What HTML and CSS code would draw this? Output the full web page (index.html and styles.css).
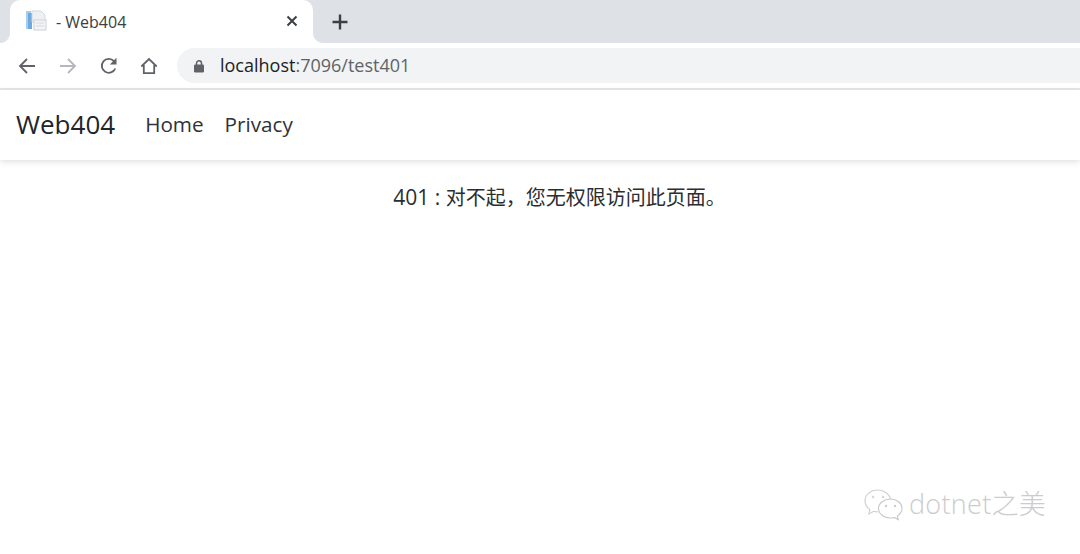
FILE: index.html
```html
<!DOCTYPE html>
<html lang="zh-CN">
<head>
<meta charset="utf-8">
<title>- Web404</title>
<link rel="stylesheet" href="styles.css">
</head>
<body>
<div class="tabstrip">
  <div class="tab">
    <svg class="favicon" width="22" height="22" viewBox="0 0 22 22">
      <rect x="1" y="1" width="5" height="18" fill="#a9cdee"/>
      <rect x="3" y="3" width="4" height="16" fill="#6fa9de"/>
      <path d="M7 1h9l4 4v7H7z" fill="#eef1f4" stroke="#d3d8de" stroke-width="1"/>
      <rect x="9" y="10" width="12" height="10" fill="#f3f4f6" stroke="#ccd2d8"/>
      <path d="M11 13h8M11 16h8" stroke="#d5d9de"/>
    </svg>
    <span class="tab-title">- Web404</span>
    <svg class="tab-close" width="12" height="12" viewBox="0 0 12 12"><path d="M1.5 1.5l9 9M10.500 1.500l-9 9" stroke="#3c4043" stroke-width="2"/></svg>
  </div>
  <svg class="new-tab" width="16" height="16" viewBox="0 0 16 16"><path d="M8 .5v15M.5 8h15" stroke="#3c4043" stroke-width="2.400"/></svg>
</div>
<div class="toolbar">
  <svg class="tool" width="20" height="20" viewBox="0 0 20 20"><path d="M18 10H3M10 3l-7 7 7 7" fill="none" stroke="#5f6368" stroke-width="1.800"/></svg>
  <svg class="tool" width="20" height="20" viewBox="0 0 20 20"><path d="M2 10h15M10 3l7 7-7 7" fill="none" stroke="#b4b7bb" stroke-width="1.800"/></svg>
  <svg class="tool" width="20" height="20" viewBox="0 0 20 20"><path d="M16.300 12.500A7 7 0 1 1 15 5.100" fill="none" stroke="#5f6368" stroke-width="1.800"/><path d="M17.500 1.800v6.700h-6.700z" fill="#5f6368"/></svg>
  <svg class="tool home" width="20" height="20" viewBox="0 0 20 20"><path d="M2.300 10.500L10 3l7.700 7.500M4.800 9v8.200h10.400V9" fill="none" stroke="#5f6368" stroke-width="1.800"/></svg>
  <div class="omnibox">
    <svg class="lock" width="12" height="14" viewBox="0 0 12 14"><path d="M3.500 6V4.200a2.500 2.500 0 0 1 5 0V6" fill="none" stroke="#5f6368" stroke-width="1.500"/><rect x="1" y="5.500" width="10" height="8" rx="1.200" fill="#5f6368"/></svg>
    <span class="url"><span class="host">localhost</span>:7096/test401</span>
  </div>
</div>
<div class="chrome-line"></div>
<nav class="navbar">
  <a class="brand">Web404</a>
  <a class="nav-link">Home</a>
  <a class="nav-link">Privacy</a>
</nav>
<main class="content"><span class="num">401 : </span>对不起，您无权限访问此页面。</main>
<div class="watermark">
  <svg width="42" height="34" viewBox="0 0 42 34">
    <path d="M15 2C7.500 2 2 6.800 2 13c0 3.600 2 6.500 5 8.700L5.800 26l5-2.700c1.500.4 2.700.6 4.200.6M28 11.500C26.500 6 21 2 15 2" fill="none" stroke="#cfcfcf" stroke-width="1.100"/>
    <path d="M27.500 11C21 11 15.500 15.200 15.500 20.500S21 30 27.500 30c1.300 0 2.600-.2 3.800-.6l4 2.300-1-3.500c2.800-2 4.700-4.700 4.700-7.700C39 15.200 34 11 27.500 11z" fill="#fff" stroke="#c8c8c8" stroke-width="1.100"/>
    <circle cx="10" cy="9" r="1.300" fill="#d8d8d8"/><circle cx="20" cy="9" r="1.300" fill="#d8d8d8"/>
    <circle cx="23" cy="18" r="1.200" fill="#cccccc"/><circle cx="32" cy="18" r="1.200" fill="#cccccc"/>
  </svg>
  <span class="mark-text">dotnet之美</span>
</div>
</body>
</html>
```
FILE: styles.css
```css
* { box-sizing: border-box; }
html, body { margin: 0; height: 100%; }
body {
  position: relative;
  overflow: hidden;
  background: #fff;
  color: #212529;
  font-family: "Open Sans", "Noto Sans CJK SC", sans-serif;
}
.tabstrip {
  display: flex;
  align-items: flex-end;
  height: 43px;
  padding-left: 10px;
  background: #dee1e6;
}
.tab {
  position: relative;
  display: flex;
  align-items: center;
  width: 303px;
  height: 43px;
  padding: 0 15px 0 15px;
  background: #fff;
  border-radius: 10px 10px 0 0;
}
.tab::before, .tab::after {
  content: "";
  position: absolute;
  bottom: 0;
  width: 10px;
  height: 10px;
  background: radial-gradient(circle at 0 0, #dee1e6 9.500px, #fff 10.500px);
}
.tab::before { left: -10px; }
.tab::after { right: -10px; background: radial-gradient(circle at 100% 0, #dee1e6 9.500px, #fff 10.500px); }
.favicon { flex: none; margin-bottom: 2px; }
.tab-title {
  flex: 1;
  margin-left: 9px;
  font-size: 16px;
  color: #3c4043;
}
.tab-close { flex: none; margin-bottom: 1px; }
.new-tab { margin: 0 0 13px 19px; }
.toolbar {
  display: flex;
  align-items: center;
  height: 45px;
  padding-left: 17px;
  gap: 21px;
  background: #fff;
}
.tool { flex: none; }
.home { margin-left: -1px; }
.omnibox {
  display: flex;
  align-items: center;
  flex: 1;
  height: 35px;
  margin-left: -3px;
  padding-left: 16px;
  background: #f1f3f4;
  border-radius: 18px 0 0 18px;
}
.lock { flex: none; margin-right: 15px; }
.url { font-size: 18px; color: #5f6368; margin-top: -2px; }
.host { color: #202124; }
.chrome-line { height: 2px; background: #e6e6e6; }
.navbar {
  display: flex;
  align-items: center;
  height: 70px;
  padding: 0 0 3px 16px;
  background: #fff;
  box-shadow: 0 2px 6px rgba(0, 0, 0, .12);
}
.brand { font-size: 26px; margin-right: 30px; }
.nav-link { font-size: 20.700px; margin: 1px 21px 0 0; color: #2f3338; }
.content {
  padding: 24px 0 0 39px;
  text-align: center;
  font-size: 20px;
  line-height: 27px;
  color: #2a2e32;
}
.num { font-size: 21px; }
.watermark {
  position: absolute;
  left: 863px;
  top: 488px;
  display: flex;
  align-items: center;
  gap: 4px;
}
.mark-text {
  margin-top: -5px;
  font-size: 27px;
  font-weight: 300;
  color: #cccccc;
  letter-spacing: .3px;
}
```
